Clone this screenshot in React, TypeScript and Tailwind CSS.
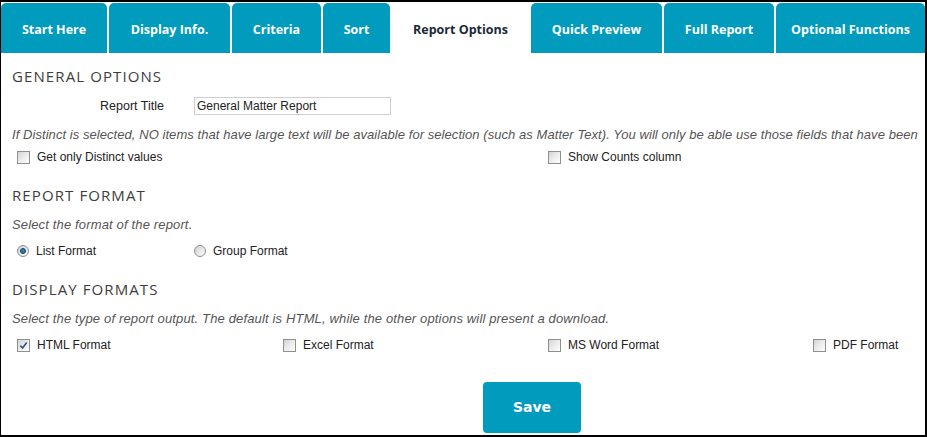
import type { ReactNode } from "react";

const tabs = [
    { label: "Start Here", w: "w-[106px]" },
    { label: "Display Info.", w: "w-[121px]" },
    { label: "Criteria", w: "w-[89px]" },
    { label: "Sort", w: "w-[67px]" },
    { label: "Report Options", w: "w-[137px]", active: true },
    { label: "Quick Preview", w: "w-[131px]" },
    { label: "Full Report", w: "w-[110px]" },
    { label: "Optional Functions", w: "w-[149px]" },
];

const CheckBox = ({ checked = false }: { checked?: boolean }) => (
    <span className="relative flex h-[13px] w-[13px] shrink-0 items-center justify-center border border-[#8e8f8f] bg-gradient-to-br from-[#d4d4d4] via-[#ececec] to-white">
        {checked && (
            <svg viewBox="0 0 10 10" className="h-[9px] w-[9px]">
                <path d="M1.5 5.2 L4 7.8 L8.6 1.6" fill="none" stroke="#3c4f86" strokeWidth="1.8" />
            </svg>
        )}
    </span>
);

const Radio = ({ checked = false }: { checked?: boolean }) => (
    <span className="flex h-[12px] w-[12px] shrink-0 items-center justify-center rounded-full border border-[#8e8f8f] bg-gradient-to-br from-[#d0d0d0] to-white">
        {checked && <span className="h-[6px] w-[6px] rounded-full border border-[#1c3d5c] bg-[#2a7fb8]" />}
    </span>
);

const Option = ({ control, children }: { control: ReactNode; children: ReactNode }) => (
    <label className="flex items-center gap-[7px] whitespace-nowrap">
        {control}
        <span>{children}</span>
    </label>
);

const Heading = ({ children }: { children: ReactNode }) => (
    <div className="flex h-[28px] items-center font-['Open_Sans',sans-serif] text-[15px] tracking-[1.1px] text-[#3d3d3d]">
        {children}
    </div>
);

const Note = ({ children, className }: { children: ReactNode; className: string }) => (
    <div className={`flex items-center whitespace-nowrap text-[13px] italic text-[#555] ${className}`}>{children}</div>
);

export default function App() {
    return (
        <div className="h-[437px] w-[927px] overflow-hidden border-t-2 border-r-2 border-b-2 border-l border-black bg-white font-['Liberation_Sans',Arial,sans-serif] text-[12px] text-[#222]">
            {/* Tabs */}
            <div className="flex gap-[2px] pt-[1px]">
                {tabs.map((t) => (
                    <div
                        key={t.label}
                        className={`flex h-[50px] shrink-0 items-center justify-center rounded-t-[5px] pt-[5px] font-['Open_Sans',sans-serif] text-[12.5px] font-bold ${t.w} ${
                            t.active ? "bg-white text-[#1b2a38]" : "bg-[#009bbd] text-white"
                        }`}
                    >
                        {t.label}
                    </div>
                ))}
            </div>

            <div className="flex flex-col pl-[11px] pt-[9px]">
                {/* General options */}
                <Heading>GENERAL OPTIONS</Heading>
                <div className="flex h-[32px] items-center">
                    <span className="w-[152px] text-right text-[12.5px]">Report Title</span>
                    <div className="ml-[30px] flex h-[18px] w-[197px] items-center border border-[#cfcfcf] px-[2px]">
                        General Matter Report
                    </div>
                </div>
                <Note className="h-[26px] tracking-[0.06px]">
                    If Distinct is selected, NO items that have large text will be available for selection (such as Matter Text). You will only be able use those fields that have been
                </Note>
                <div className="grid h-[16px] grid-cols-[531px_265px] items-center pl-[5px]">
                    <Option control={<CheckBox />}>Get only Distinct values</Option>
                    <Option control={<CheckBox />}>Show Counts column</Option>
                </div>

                {/* Report format */}
                <div className="mt-[17px]">
                    <Heading>REPORT FORMAT</Heading>
                </div>
                <Note className="h-[32px] tracking-[0.15px]">Select the format of the report.</Note>
                <div className="grid h-[20px] grid-cols-[177px_200px] items-center pl-[5px]">
                    <Option control={<Radio checked />}>List Format</Option>
                    <Option control={<Radio />}>Group Format</Option>
                </div>

                {/* Display formats */}
                <div className="mt-[14px]">
                    <Heading>DISPLAY FORMATS</Heading>
                </div>
                <Note className="h-[32px] tracking-[0.15px]">
                    Select the type of report output. The default is HTML, while the other options will present a download.
                </Note>
                <div className="grid h-[20px] grid-cols-[266px_265px_265px_265px] items-center pl-[5px]">
                    <Option control={<CheckBox checked />}>HTML Format</Option>
                    <Option control={<CheckBox />}>Excel Format</Option>
                    <Option control={<CheckBox />}>MS Word Format</Option>
                    <Option control={<CheckBox />}>PDF Format</Option>
                </div>

                <div className="mt-[27px] pl-[471px]">
                    <button
                        type="button"
                        className="h-[51px] w-[98px] rounded-[4px] bg-[#009bbd] font-['DejaVu_Sans',sans-serif] text-[14px] font-bold text-white"
                    >
                        Save
                    </button>
                </div>
            </div>
        </div>
    );
}
